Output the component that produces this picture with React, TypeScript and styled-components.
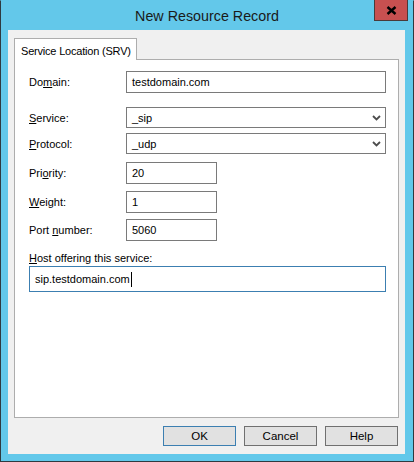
import React from "react";
import styled, { createGlobalStyle } from "styled-components";

const GlobalStyle = createGlobalStyle`
  html, body {
    margin: 0;
    padding: 0;
    background: #ffffff;
  }
  body {
    font-family: "Liberation Sans", Arial, sans-serif;
    font-size: 11px;
    color: #000;
  }
`;

type FieldProps = {
  label: React.ReactNode;
  value: string;
  width: number;
  top: number;
  select?: boolean;
};

const Field: React.FC<FieldProps> = ({ label, value, width, top, select }) => (
  <Row $top={top}>
    <Label>{label}</Label>
    {select ? (
      <Select $width={width}>
        <FieldText>{value}</FieldText>
        <svg width="9" height="6" viewBox="0 0 9 6">
          <path
            d="M1 1 L4.5 4.5 L8 1"
            fill="none"
            stroke="#4d4d4d"
            strokeWidth="1.8"
          />
        </svg>
      </Select>
    ) : (
      <TextBox $width={width} $height={22}>
        <FieldText>{value}</FieldText>
      </TextBox>
    )}
  </Row>
);

export default function App() {
  return (
    <>
      <GlobalStyle />
      <Window>
        <TitleBar>
          <span />
          <Title>New Resource Record</Title>
          <CloseButton>
            <svg width="11" height="9" viewBox="0 0 11 9">
              <path
                d="M1.5 1 L9.5 8 M9.5 1 L1.5 8"
                stroke="#000"
                strokeWidth="2.4"
              />
            </svg>
          </CloseButton>
        </TitleBar>

        <Client>
          <TabStrip>
            <Tab>Service Location (SRV)</Tab>
          </TabStrip>

          <Pane>
            <Field
              top={11}
              width={260}
              value="testdomain.com"
              label={
                <>
                  Do<u>m</u>ain:
                </>
              }
            />
            <Field
              top={14}
              width={260}
              value="_sip"
              select
              label={
                <>
                  <u>S</u>ervice:
                </>
              }
            />
            <Field
              top={5}
              width={260}
              value="_udp"
              select
              label={
                <>
                  <u>P</u>rotocol:
                </>
              }
            />
            <Field
              top={8}
              width={91}
              value="20"
              label={
                <>
                  Pri<u>o</u>rity:
                </>
              }
            />
            <Field
              top={7}
              width={91}
              value="1"
              label={
                <>
                  <u>W</u>eight:
                </>
              }
            />
            <Field
              top={6}
              width={91}
              value="5060"
              label={
                <>
                  Port <u>n</u>umber:
                </>
              }
            />

            <HostLabel>
              <u>H</u>ost offering this service:
            </HostLabel>
            <TextBox $width={357} $height={26} $focused>
              <FieldText>sip.testdomain.com</FieldText>
              <Caret />
            </TextBox>
          </Pane>

          <Buttons>
            <DialogButton $default>OK</DialogButton>
            <DialogButton>Cancel</DialogButton>
            <DialogButton>Help</DialogButton>
          </Buttons>
        </Client>
      </Window>
    </>
  );
}

const Window = styled.div`
  width: 414px;
  height: 462px;
  box-sizing: border-box;
  border: 1px solid #2f3a40;
  border-top-color: #63c8ea;
  background: #63c8ea;
  display: flex;
  flex-direction: column;
`;

const TitleBar = styled.div`
  height: 29px;
  display: grid;
  grid-template-columns: 1fr auto 1fr;
  align-items: start;
`;

const Title = styled.div`
  font-family: "Liberation Sans", Arial, sans-serif;
  font-size: 14.3px;
  color: #1a1a1a;
  line-height: 29px;
  padding-top: 1px;
`;

const CloseButton = styled.div`
  justify-self: end;
  margin-top: -1px;
  margin-right: 5px;
  width: 34px;
  height: 21px;
  box-sizing: border-box;
  background: #c75050;
  border: 1px solid #4a3a3a;
  border-top: none;
  display: flex;
  align-items: center;
  justify-content: center;
`;

const Client = styled.div`
  flex: 1;
  margin: 0 8px 7px 7px;
  background: #f0f0f0;
  padding: 8px 6px 8px 6px;
  display: flex;
  flex-direction: column;
`;

const TabStrip = styled.div`
  display: flex;
  height: 21px;
`;

const Tab = styled.div`
  position: relative;
  z-index: 1;
  width: 123px;
  height: 22px;
  box-sizing: border-box;
  border: 1px solid #adadad;
  border-bottom: none;
  background: #ffffff;
  padding: 5px 0 0 6px;
  line-height: 14px;
  letter-spacing: -0.2px;
  white-space: nowrap;
`;

const Pane = styled.div`
  flex: 1;
  background: #ffffff;
  border: 1px solid #adadad;
  padding: 0 0 0 14px;
  display: flex;
  flex-direction: column;
`;

const Row = styled.div<{ $top: number }>`
  display: flex;
  align-items: center;
  margin-top: ${(p) => p.$top}px;
`;

const Label = styled.div`
  width: 97px;
  line-height: 14px;
  white-space: nowrap;
`;

const TextBox = styled.div<{
  $width: number;
  $height: number;
  $focused?: boolean;
}>`
  width: ${(p) => p.$width}px;
  height: ${(p) => p.$height}px;
  box-sizing: border-box;
  border: 1px solid ${(p) => (p.$focused ? "#3c7fb1" : "#7a7a7a")};
  background: #ffffff;
  padding: 0 0 0 5px;
  display: flex;
  align-items: center;
`;

const Select = styled.div<{ $width: number }>`
  width: ${(p) => p.$width}px;
  height: 21px;
  box-sizing: border-box;
  border: 1px solid #7a7a7a;
  background: #ffffff;
  padding: 0 4px 0 5px;
  display: flex;
  align-items: center;
  justify-content: space-between;
`;

const FieldText = styled.span`
  line-height: 14px;
  white-space: nowrap;
`;

const Caret = styled.span`
  display: inline-block;
  width: 1px;
  height: 15px;
  background: #000;
  margin-left: 1px;
`;

const HostLabel = styled.div`
  margin-top: 9px;
  height: 16px;
  line-height: 16px;
  white-space: nowrap;
`;

const Buttons = styled.div`
  display: flex;
  justify-content: flex-end;
  gap: 8px;
  margin-top: 8px;
  padding-right: 1px;
`;

const DialogButton = styled.div<{ $default?: boolean }>`
  width: 73px;
  height: 20px;
  box-sizing: border-box;
  border: 1px solid ${(p) => (p.$default ? "#3c7fb1" : "#707070")};
  background: #e1e1e1;
  display: flex;
  align-items: center;
  justify-content: center;
  font-size: 11.5px;
`;
